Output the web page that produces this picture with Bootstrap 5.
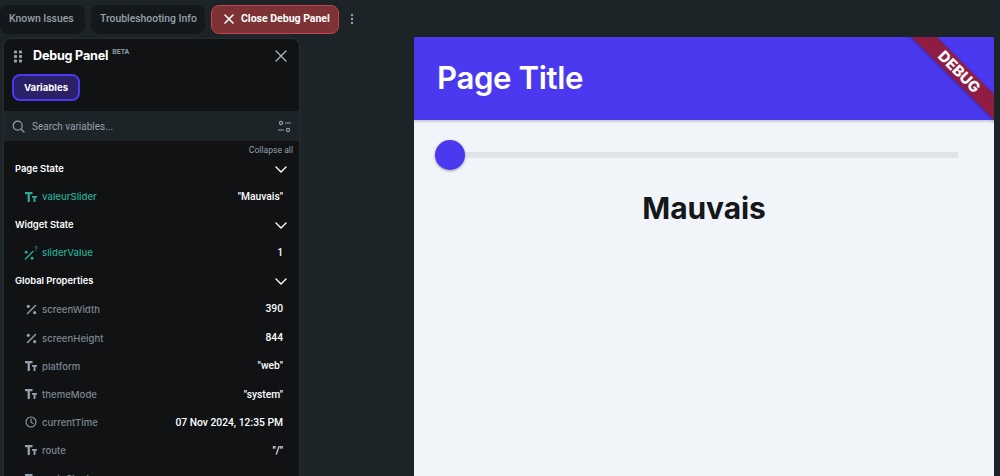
<!DOCTYPE html>
<html lang="en">
<head>
  <meta charset="UTF-8">
  <meta name="viewport" content="width=device-width, initial-scale=1.0">
  <title>Debug Panel</title>
  <link href="https://cdn.jsdelivr.net/npm/bootstrap@5.3.0/dist/css/bootstrap.min.css" rel="stylesheet">
  <style>
    html, body { height: 476px; overflow: hidden; }
    body { background-color: #1d2428; font-family: Roboto, "Liberation Sans", sans-serif; color: #fff; }

    .top-bar { height: 37px; padding: 1px 0 0 0; gap: 6px; white-space: nowrap; }
    .top-tab { height: 29px; background: #14181b; color: #95a1ac; font-size: 10.4px; font-weight: 500; border-radius: 8px; padding: 0 9px; }
    .tab-known { width: 85px; }
    .tab-trouble { width: 114px; }
    .tab-close { width: 128px; background: #7d3236; border: 1px solid #c4454d; color: #fff; font-size: 10.5px; font-weight: 700; gap: 6px; padding: 0 0 0 11px; }
    .tab-more { margin-left: 3px; }

    .main-area { height: 439px; }
    .debug-side { width: 414px; padding-left: 3px; }
    .debug-panel { width: 297px; height: 460px; background: #101214; border: 1px solid #262d34; border-bottom: 0; border-radius: 8px 8px 0 0; overflow: hidden; margin-top: 1px; }
    .panel-head { height: 34px; padding: 0 12px 0 9px; }
    .panel-title { font-family: Inter, sans-serif; font-size: 12.6px; font-weight: 700; margin-left: 10px; letter-spacing: -.2px; }
    .beta-tag { font-size: 7px; font-weight: 600; color: #95a1ac; margin: -8px 0 0 4px; }
    .tab-row { height: 38px; padding: 1px 0 0 8px; }
    .vars-btn { height: 27px; width: 68px; padding: 1px 0 0; background: #2a2169; border: 2px solid #4b39ef; border-radius: 8px; color: #fff; font-family: Inter, sans-serif; font-size: 9.6px; font-weight: 700; }
    .search-row { height: 30px; background: #1d2428; padding: 0 8px 0 8px; color: #95a1ac; font-size: 10px; }
    .search-text { margin-left: 7px; }
    .collapse-row { height: 16px; padding-right: 6px; font-size: 8.6px; color: #95a1ac; line-height: 19px; }
    .group-row { height: 24px; padding: 0 12px 0 11px; font-family: Inter, sans-serif; font-size: 9.4px; font-weight: 600; }
    .var-row { height: 28.1px; padding: 0 16px 0 20px; font-size: 10.3px; }
    .var-row.first-single { height: 32px; padding-bottom: 1px; }
    .var-row.first-long { height: 31px; padding-top: 1px; }
    .var-icon { width: 14px; margin-right: 4px; }
    .var-name { color: #7c8791; font-family: Inter, sans-serif; font-size: 9.6px; font-weight: 500; padding-top: 2px; }
    .var-active .var-name { color: #2bab97; }
    .var-value { font-weight: 500; color: #fff; }

    .device { width: 580px; background: #f1f4f8; height: 439px; overflow: hidden; position: relative; }
    .app-bar { height: 83px; background: #4b39ef; padding-left: 23px; box-shadow: 0 1px 3px rgba(0,0,0,.25); }
    .app-title { font-family: Inter, sans-serif; font-size: 31.2px; font-weight: 600; color: #fff; letter-spacing: -.4px; margin: 0; }
    .slider-row { height: 30px; margin: 20px 36px 0 21px; }
    .slider-track { height: 6px; background: #e0e3e7; width: 100%; }
    .slider-thumb { width: 30px; height: 30px; background: #4b39ef; border-radius: 50%; box-shadow: 0 1px 3px rgba(0,0,0,.35); flex-shrink: 0; margin-right: -15px; z-index: 1; }
    .value-text { font-family: Inter, sans-serif; font-size: 30px; font-weight: 700; color: #14181b; margin-top: 20px; line-height: 36px; letter-spacing: -.1px; }
    .debug-ribbon { position: absolute; top: 25.5px; right: -40px; width: 150px; height: 18px; background: #8f1d43; color: #fff; font-size: 15px; font-weight: 800; font-family: Inter, sans-serif; text-align: center; line-height: 18px; transform: rotate(45deg); box-shadow: 0 1px 4px rgba(0,0,0,.25); }
  </style>
</head>
<body>
  <div class="top-bar d-flex align-items-center">
    <div class="top-tab tab-known d-flex align-items-center">Known Issues</div>
    <div class="top-tab tab-trouble d-flex align-items-center">Troubleshooting Info</div>
    <div class="top-tab tab-close d-flex align-items-center">
      <svg width="12" height="12" viewBox="0 0 12 12" fill="none" stroke="#fff" stroke-width="1.6" stroke-linecap="round"><path d="M2 2l8 8M10 2l-8 8"/></svg>
      <span>Close Debug Panel</span>
    </div>
    <svg class="tab-more" width="8" height="12" viewBox="0 0 8 12" fill="#95a1ac"><circle cx="4" cy="2" r="1.2"/><circle cx="4" cy="6" r="1.2"/><circle cx="4" cy="10" r="1.2"/></svg>
  </div>

  <div class="main-area d-flex">
    <div class="debug-side">
      <div class="debug-panel">
        <div class="panel-head d-flex align-items-center">
          <svg width="10" height="13" viewBox="0 0 10 13" fill="#95a1ac"><rect x="1" y="0.5" width="3" height="3" rx=".8"/><rect x="6" y="0.5" width="3" height="3" rx=".8"/><rect x="1" y="5" width="3" height="3" rx=".8"/><rect x="6" y="5" width="3" height="3" rx=".8"/><rect x="1" y="9.5" width="3" height="3" rx=".8"/><rect x="6" y="9.5" width="3" height="3" rx=".8"/></svg>
          <span class="panel-title">Debug Panel</span>
          <span class="beta-tag">BETA</span>
          <svg class="ms-auto" width="12" height="12" viewBox="0 0 12 12" fill="none" stroke="#a9b3bc" stroke-width="1.4" stroke-linecap="round"><path d="M1 1l10 10M11 1L1 11"/></svg>
        </div>
        <div class="tab-row d-flex align-items-start">
          <button class="vars-btn d-flex align-items-center justify-content-center" type="button">Variables</button>
        </div>
        <div class="search-row d-flex align-items-center">
          <svg width="13" height="13" viewBox="0 0 13 13" fill="none" stroke="#95a1ac" stroke-width="1.2" stroke-linecap="round"><circle cx="5.7" cy="5.7" r="4.5"/><path d="M9 9l3 3"/></svg>
          <span class="search-text">Search variables...</span>
          <svg class="ms-auto" width="13" height="13" viewBox="0 0 13 13" fill="none" stroke="#95a1ac" stroke-width="1.1" stroke-linecap="round"><circle cx="3" cy="3" r="1.6"/><path d="M7.5 3h5M.5 10h5"/><circle cx="10" cy="10" r="1.6"/></svg>
        </div>
        <div class="collapse-row text-end">Collapse all</div>

        <div id="variables"></div>
      </div>
    </div>

    <div class="device flex-shrink-0">
      <div class="app-bar d-flex align-items-center">
        <h1 class="app-title">Page Title</h1>
      </div>
      <div class="slider-row d-flex align-items-center">
        <div class="slider-thumb"></div>
        <div class="slider-track"></div>
      </div>
      <div class="value-text text-center">Mauvais</div>
      <div class="debug-ribbon">DEBUG</div>
    </div>
  </div>

  <script src="https://cdn.jsdelivr.net/npm/bootstrap@5.3.0/dist/js/bootstrap.bundle.min.js"></script>
  <script>
    const icons = {
      text: c => `<svg width="12" height="10" viewBox="0 0 12 10" fill="${c}"><path d="M0 0h7.5v2.200H4.900V10H2.600V2.200H0zM7 4h5v1.700h-1.500V10H8.600V5.700H7z"/></svg>`,
      num: c => `<svg width="11" height="11" viewBox="0 0 11 11" fill="none"><path d="M9.5 1.500L1.500 9.500" stroke="${c}" stroke-width="1.5" stroke-linecap="round"/><circle cx="2.300" cy="2.300" r="1.600" fill="${c}"/><circle cx="8.700" cy="8.700" r="1.600" fill="${c}"/></svg>`,
      numOpt: c => `<svg width="15" height="16" viewBox="0 0 15 16" fill="none"><path d="M9.500 6.500L1.500 14.500" stroke="${c}" stroke-width="1.5" stroke-linecap="round"/><circle cx="2.300" cy="7.300" r="1.600" fill="${c}"/><circle cx="8.700" cy="13.700" r="1.600" fill="${c}"/><path d="M11.500 1.500c.8-1 2.700-.6 2.400.8-.2.800-1.200.9-1.300 2M12.600 5.400v.8" stroke="${c}" stroke-width="1"/></svg>`,
      time: c => `<svg width="12" height="12" viewBox="0 0 12 12" fill="none" stroke="${c}" stroke-width="1.1" stroke-linecap="round"><circle cx="6" cy="6" r="5"/><path d="M6 3v3.200l2 1.200"/></svg>`
    };
    const chevron = '<svg class="ms-auto" width="12" height="7" viewBox="0 0 12 7" fill="none" stroke="#fff" stroke-width="1.4" stroke-linecap="round" stroke-linejoin="round"><path d="M1 1l5 5 5-5"/></svg>';

    const groups = [
      { title: "Page State", active: true, vars: [["text", "valeurSlider", '"Mauvais"']] },
      { title: "Widget State", active: true, vars: [["numOpt", "sliderValue", "1"]] },
      { title: "Global Properties", active: false, vars: [
        ["num", "screenWidth", "390"],
        ["num", "screenHeight", "844"],
        ["text", "platform", '"web"'],
        ["text", "themeMode", '"system"'],
        ["time", "currentTime", "07 Nov 2024, 12:35 PM"],
        ["text", "route", '"/"'],
        ["text", "routeStack", ""]
      ] }
    ];

    let html = "";
    groups.forEach(group => {
      html += `<div class="group-row d-flex align-items-center">${group.title}${chevron}</div>`;
      const color = group.active ? "#2bab97" : "#95a1ac";
      group.vars.forEach((v, i) => {
        const first = i === 0 ? (group.vars.length === 1 ? "first-single" : "first-long") : "";
        html += `<div class="var-row ${group.active ? "var-active" : ""} ${first} d-flex align-items-center">
          <span class="var-icon d-flex justify-content-center">${icons[v[0]](color)}</span>
          <span class="var-name">${v[1]}</span>
          <span class="var-value ms-auto">${v[2]}</span>
        </div>`;
      });
    });
    document.getElementById("variables").innerHTML = html;
  </script>
</body>
</html>
